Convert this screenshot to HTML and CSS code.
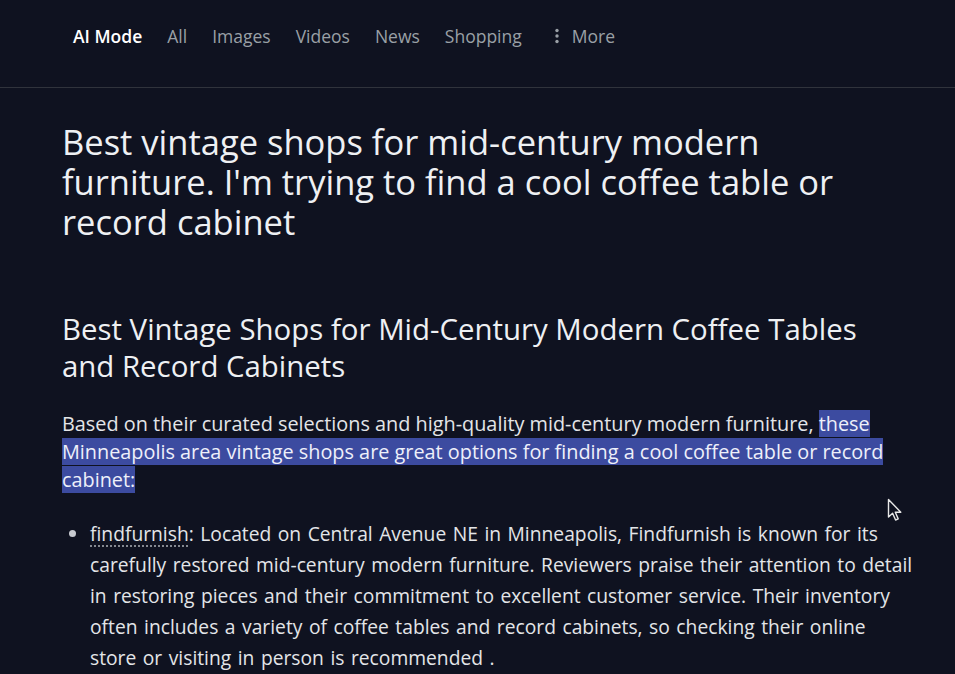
FILE: index.html
```html
<!DOCTYPE html>
<html lang="en">
<head>
<meta charset="utf-8">
<title>AI Mode</title>
<link rel="stylesheet" href="styles.css">
</head>
<body>
<header class="topbar">
  <nav class="tabs">
    <span class="tab tab-active">AI Mode</span>
    <span class="tab">All</span>
    <span class="tab">Images</span>
    <span class="tab">Videos</span>
    <span class="tab">News</span>
    <span class="tab">Shopping</span>
    <span class="tab tab-more">
      <svg class="dots" width="4" height="16" viewBox="0 0 4 16"><circle cx="2" cy="2.5" r="1.7"/><circle cx="2" cy="8" r="1.7"/><circle cx="2" cy="13.5" r="1.7"/></svg>
      More
    </span>
  </nav>
</header>
<main class="content">
  <h1 class="query">Best vintage shops for mid-century modern furniture. I'm trying to find a cool coffee table or record cabinet</h1>
  <h2 class="answer-title">Best Vintage Shops for Mid-Century Modern Coffee Tables and Record Cabinets</h2>
  <p class="lead">Based on their curated selections and high-quality mid-century modern furniture, <span class="sel">these Minneapolis area vintage shops are great options for finding a cool coffee table or record cabinet:</span></p>
  <ul class="shops">
    <li><span class="shop-name">findfurnish</span>: Located on Central Avenue NE in Minneapolis, Findfurnish is known for its carefully restored mid-century modern furniture. Reviewers praise their attention to detail in restoring pieces and their commitment to excellent customer service. Their inventory often includes a variety of coffee tables and record cabinets, so checking their online store or visiting in person is recommended .</li>
  </ul>
</main>
<svg class="cursor" width="16" height="24" viewBox="0 0 16 24"><path d="M1.5 1.5 L1.5 19 L5.6 15.2 L8.6 22 L11.2 20.9 L8.3 14.2 L13.8 14.2 Z" fill="#0f1220" stroke="#e8e8e8" stroke-width="1.4" stroke-linejoin="round"/></svg>
</body>
</html>
```

FILE: styles.css
```css
html, body {
  margin: 0;
  padding: 0;
  background: #0f1220;
}
body {
  font-family: "Open Sans", Roboto, "Liberation Sans", sans-serif;
  color: #e8eaed;
  min-height: 674px;
  overflow: hidden;
  position: relative;
}
.topbar {
  padding-bottom: 15px;
  border-bottom: 1px solid #30333c;
}
.tabs {
  display: flex;
  align-items: center;
  height: 72px;
  padding-left: 73px;
  gap: 25px;
  font-size: 17.5px;
}
.tab {
  color: #9aa0a6;
  display: flex;
  align-items: center;
  gap: 13px;
}
.tab-active {
  color: #ffffff;
  font-weight: 600;
}
.tab-more {
  margin-left: 8px;
}
.dots {
  fill: #9aa0a6;
}
.content {
  width: 853px;
  padding-left: 62px;
}
.query {
  margin: 34px 0 0;
  font-size: 34.5px;
  line-height: 40px;
  font-weight: 400;
  color: #eef0f3;
}
.answer-title {
  margin: 69px 0 0;
  max-width: 830px;
  font-size: 29.4px;
  line-height: 37px;
  font-weight: 400;
  color: #eef0f3;
}
.lead {
  margin: 25px 0 0;
  font-size: 19.85px;
  line-height: 28px;
  color: #e3e5e8;
}
.sel {
  background: #3c4ba0;
  color: #eef0fa;
}
.shops {
  margin: 24px 0 0;
  padding-left: 28px;
  font-size: 19.25px;
  word-spacing: 1.5px;
  line-height: 31px;
  color: #e3e5e8;
}
.shops li::marker {
  color: #c8cad0;
}
.shop-name {
  text-decoration: underline dotted #8a8e96;
  text-underline-offset: 5px;
}
.cursor {
  position: absolute;
  left: 887px;
  top: 498px;
}
```
